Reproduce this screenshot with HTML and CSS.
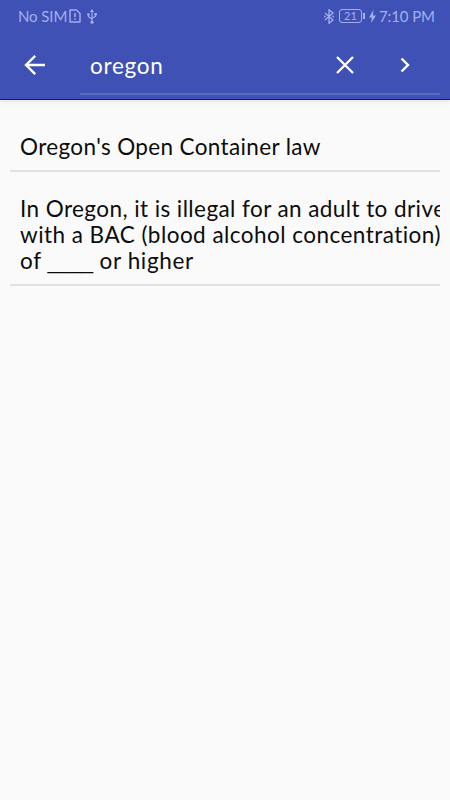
FILE: index.html
```html
<!DOCTYPE html>
<html lang="en">
<head>
  <meta charset="UTF-8">
  <meta name="viewport" content="width=device-width, initial-scale=1.0">
  <title>Search</title>
  <link rel="stylesheet" href="styles.css">
</head>
<body>

  <header class="app-bar">
    <div class="status-bar">
      <span class="carrier">No SIM</span>
      <svg class="sim-icon" width="12" height="14" viewBox="0 0 12 14">
        <path d="M1 1h6.5L11 4.5V13H1z" fill="none" stroke="currentColor" stroke-width="1.4" stroke-linejoin="round"/>
        <path d="M6 4v4M6 9.2v1.6" stroke="currentColor" stroke-width="1.5"/>
      </svg>
      <svg class="usb-icon" width="10" height="15" viewBox="0 0 10 15">
        <path d="M5 2v11M1.4 5.5v2.2L5 10M8.6 5v2.2L5 9.2" fill="none" stroke="currentColor" stroke-width="1.1"/>
        <path d="M5 0l2 3H3z" fill="currentColor"/>
        <circle cx="5" cy="13.2" r="1.6" fill="currentColor"/>
        <circle cx="1.4" cy="5.5" r="1.3" fill="currentColor"/>
        <path d="M7.4 4h2.4v2.4H7.4z" fill="currentColor"/>
      </svg>
      <svg class="bluetooth-icon" width="10" height="15" viewBox="0 0 10 15">
        <path d="M1 4l8 7-4 3.3V.7L9 4l-8 7" fill="none" stroke="currentColor" stroke-width="1.3"/>
        <path d="M0 6.8h1.6v1.4H0zM8.4 6.8H10v1.4H8.4z" fill="currentColor"/>
      </svg>
      <span class="battery">21</span>
      <span class="battery-tip"></span>
      <svg class="bolt-icon" width="7" height="13" viewBox="0 0 7 13">
        <path d="M4.4 0L0 7.4h2.8L2.2 13 7 5.4H4z" fill="currentColor"/>
      </svg>
      <span class="clock">7:10 PM</span>
    </div>

    <div class="toolbar">
      <button class="icon-button back" aria-label="Back">
        <svg width="22" height="22" viewBox="0 0 22 22">
          <path d="M21 11H2.5M11.2 1.8L2 11l9.2 9.2" fill="none" stroke="currentColor" stroke-width="2.4"/>
        </svg>
      </button>
      <div class="search-box">
        <input class="search-input" type="text" value="oregon" aria-label="Search query">
        <button class="icon-button" aria-label="Clear">
          <svg width="18" height="18" viewBox="0 0 18 18">
            <path d="M1 1l16 16M17 1L1 17" stroke="currentColor" stroke-width="2.3"/>
          </svg>
        </button>
        <button class="icon-button" aria-label="Search">
          <svg width="10" height="16" viewBox="0 0 10 16">
            <path d="M1.5 1.5L8 8l-6.5 6.5" fill="none" stroke="currentColor" stroke-width="2.4"/>
          </svg>
        </button>
      </div>
    </div>
  </header>

  <ul class="results">
    <li class="result"><span class="line title">Oregon's Open Container law</span></li>
    <li class="result">
      <span class="line drive">In Oregon, it is illegal for an adult to drive</span>
      <span class="line bac">with a BAC (blood alcohol concentration)</span>
      <span class="line rest">of <span class="blank">____</span> or higher</span>
    </li>
  </ul>

</body>
</html>
```
FILE: styles.css
```css
* {
  margin: 0;
  padding: 0;
  box-sizing: border-box;
}
body {
  font-family: Lato, "Open Sans", sans-serif;
  background-color: #fafafa;
  color: #0c0c0c;
  min-height: 100vh;
  overflow: hidden;
}
svg {
  display: block;
  flex: none;
}
.app-bar {
  height: 100px;
  background-color: #3f51b5;
  border-bottom: 1px solid #0a1a8c;
  box-shadow: 0 1px 5px rgba(0, 0, 0, 0.12);
}
.status-bar {
  height: 30px;
  padding: 2px 15px 0 18px;
  display: flex;
  align-items: center;
  color: #a4b0ee;
  font-size: 15px;
  white-space: nowrap;
}
.carrier {
  width: 51px;
  padding-bottom: 1px;
  letter-spacing: -0.1px;
}
.usb-icon {
  margin-left: 6px;
}
.bluetooth-icon {
  margin-left: auto;
}
.battery {
  width: 23px;
  height: 14px;
  margin-left: 5px;
  border: 1px solid currentColor;
  border-radius: 3px;
  font-size: 11px;
  line-height: 12px;
  text-align: center;
}
.battery-tip {
  width: 2px;
  height: 6px;
  margin-left: 1px;
  background-color: currentColor;
}
.bolt-icon {
  margin: 0 3px 0 4px;
}
.clock {
  width: 56px;
  padding-bottom: 1px;
  letter-spacing: -0.1px;
}
.toolbar {
  height: 65px;
  padding-right: 10px;
  display: flex;
}
.icon-button {
  width: 60px;
  height: 70px;
  flex: none;
  display: flex;
  justify-content: center;
  align-items: center;
  border: none;
  background: none;
  color: white;
}
.back {
  width: 70px;
  margin-right: 10px;
}
.search-box {
  flex: 1;
  min-width: 0;
  padding-right: 5px;
  display: flex;
  border-bottom: 2px solid #5c6bc0;
}
.search-input {
  flex: 1;
  min-width: 0;
  height: 70px;
  padding: 0 10px;
  border: none;
  outline: none;
  background: none;
  color: white;
  font-family: inherit;
  font-size: 22.5px;
  letter-spacing: 0.7px;
}
.results {
  padding: 11px 10px 0;
  list-style: none;
}
.result {
  padding: 23px 0 10px 10px;
  border-bottom: 2px solid #e1e1e1;
  font-size: 22.5px;
  line-height: 26px;
  overflow: hidden;
}
.result + .result {
  padding-top: 24px;
}
.line {
  display: block;
  height: 26px;
  white-space: nowrap;
}
.title {
  letter-spacing: 0.36px;
}
.drive {
  letter-spacing: 0.42px;
}
.bac {
  letter-spacing: 0.46px;
}
.rest {
  letter-spacing: 0.62px;
}
.blank {
  font-family: "Liberation Sans", sans-serif;
  font-size: 20.5px;
  letter-spacing: 0;
}
```
